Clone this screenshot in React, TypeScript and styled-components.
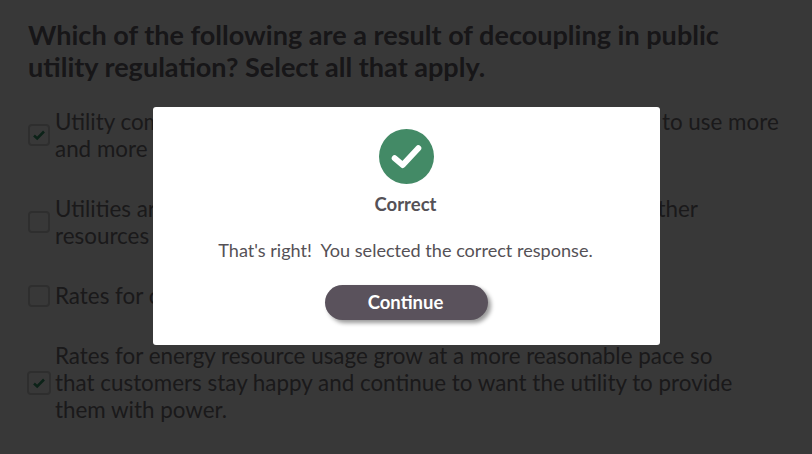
import { createGlobalStyle } from "styled-components";
import styled from "styled-components";

const GlobalStyle = createGlobalStyle`
  html, body {
    margin: 0;
    padding: 0;
    height: 100%;
    overflow: hidden;
    background: #fff;
    font-family: Lato, "Open Sans", sans-serif;
  }
  * {
    box-sizing: border-box;
  }
`;

const Page = styled.div`
  padding: 19px 28px 0;
`;

const Question = styled.h1`
  margin: 0 0 25px;
  max-width: 730px;
  font-size: 27.05px;
  line-height: 32px;
  font-weight: 700;
  color: #6a666c;
`;

const Options = styled.div`
  display: flex;
  flex-direction: column;
  gap: 33px;
`;

const Option = styled.div`
  display: flex;
  align-items: center;
  gap: 5px;
  font-size: 22.4px;
  line-height: 27px;
  color: #767278;
`;

const OptionText = styled.span<{ $maxWidth?: number }>`
  max-width: ${(p) => (p.$maxWidth ? `${p.$maxWidth}px` : "none")};
`;

const Box = styled.span<{ $active?: boolean }>`
  flex: none;
  width: ${(p) => (p.$active ? "24px" : "22px")};
  height: ${(p) => (p.$active ? "24px" : "22px")};
  margin: 0 ${(p) => (p.$active ? "-1px" : "0")};
  display: flex;
  align-items: center;
  justify-content: center;
  background: #fff;
  border: 2px solid #d0d0d0;
  border-radius: 4px;
  color: #3a9a6c;
`;

const Overlay = styled.div`
  position: fixed;
  inset: 0;
  background: rgba(0, 0, 0, 0.78);
`;

const Modal = styled.div`
  position: absolute;
  left: 153px;
  top: 107px;
  width: 507px;
  height: 238px;
  padding-top: 22px;
  display: flex;
  flex-direction: column;
  align-items: center;
  background: #fff;
  border-radius: 3px;
  color: #555156;
`;

const Badge = styled.svg`
  display: block;
  width: 55px;
  height: 55px;
`;

const ModalTitle = styled.div`
  margin: 9px 2px 0 0;
  font-size: 18.5px;
  line-height: 22px;
  font-weight: 700;
`;

const ModalText = styled.p`
  margin: 24px 2px 0 0;
  font-size: 18.1px;
  line-height: 22px;
  white-space: pre;
`;

const ContinueButton = styled.button`
  margin-top: 24px;
  width: 163px;
  height: 35px;
  padding: 0 2px 2px 0;
  border: none;
  border-radius: 18px;
  background: #5a525c;
  color: #fff;
  font-family: inherit;
  font-size: 18.5px;
  font-weight: 700;
  box-shadow: 3px 3px 4px rgba(0, 0, 0, 0.4);
  cursor: pointer;
`;

function SmallCheck() {
  return (
    <svg width="14" height="12" viewBox="0 0 14 12" fill="none">
      <path d="M2 6.5 L5.2 9.5 L12 2.5" stroke="currentColor" strokeWidth="2.6" />
    </svg>
  );
}

export default function App() {
  return (
    <>
      <GlobalStyle />
      <Page>
        <Question>
          Which of the following are a result of decoupling in public utility regulation? Select all that apply.
        </Question>
        <Options>
          <Option>
            <Box>
              <SmallCheck />
            </Box>
            <OptionText>
              Utility companies have less of an incentive to push customers to use more and more energy.
            </OptionText>
          </Option>
          <Option>
            <Box />
            <OptionText>
              Utilities are able to invest in energy efficiency programs and other resources as needed.
            </OptionText>
          </Option>
          <Option>
            <Box />
            <OptionText>Rates for customers are no longer regulated.</OptionText>
          </Option>
          <Option>
            <Box $active>
              <SmallCheck />
            </Box>
            <OptionText $maxWidth={690}>
              Rates for energy resource usage grow at a more reasonable pace so that customers stay happy and continue to want the utility to provide them with power.
            </OptionText>
          </Option>
        </Options>
      </Page>
      <Overlay>
        <Modal>
          <Badge viewBox="0 0 55 55" fill="none">
            <circle cx="27.5" cy="27.5" r="27.5" fill="#438a66" />
            <path
              d="M15.7 29.3 L23.7 36 L39.3 19.3"
              stroke="#fff"
              strokeWidth="6"
              strokeLinecap="round"
              strokeLinejoin="round"
            />
          </Badge>
          <ModalTitle>Correct</ModalTitle>
          <ModalText>That's right!  You selected the correct response.</ModalText>
          <ContinueButton>Continue</ContinueButton>
        </Modal>
      </Overlay>
    </>
  );
}
